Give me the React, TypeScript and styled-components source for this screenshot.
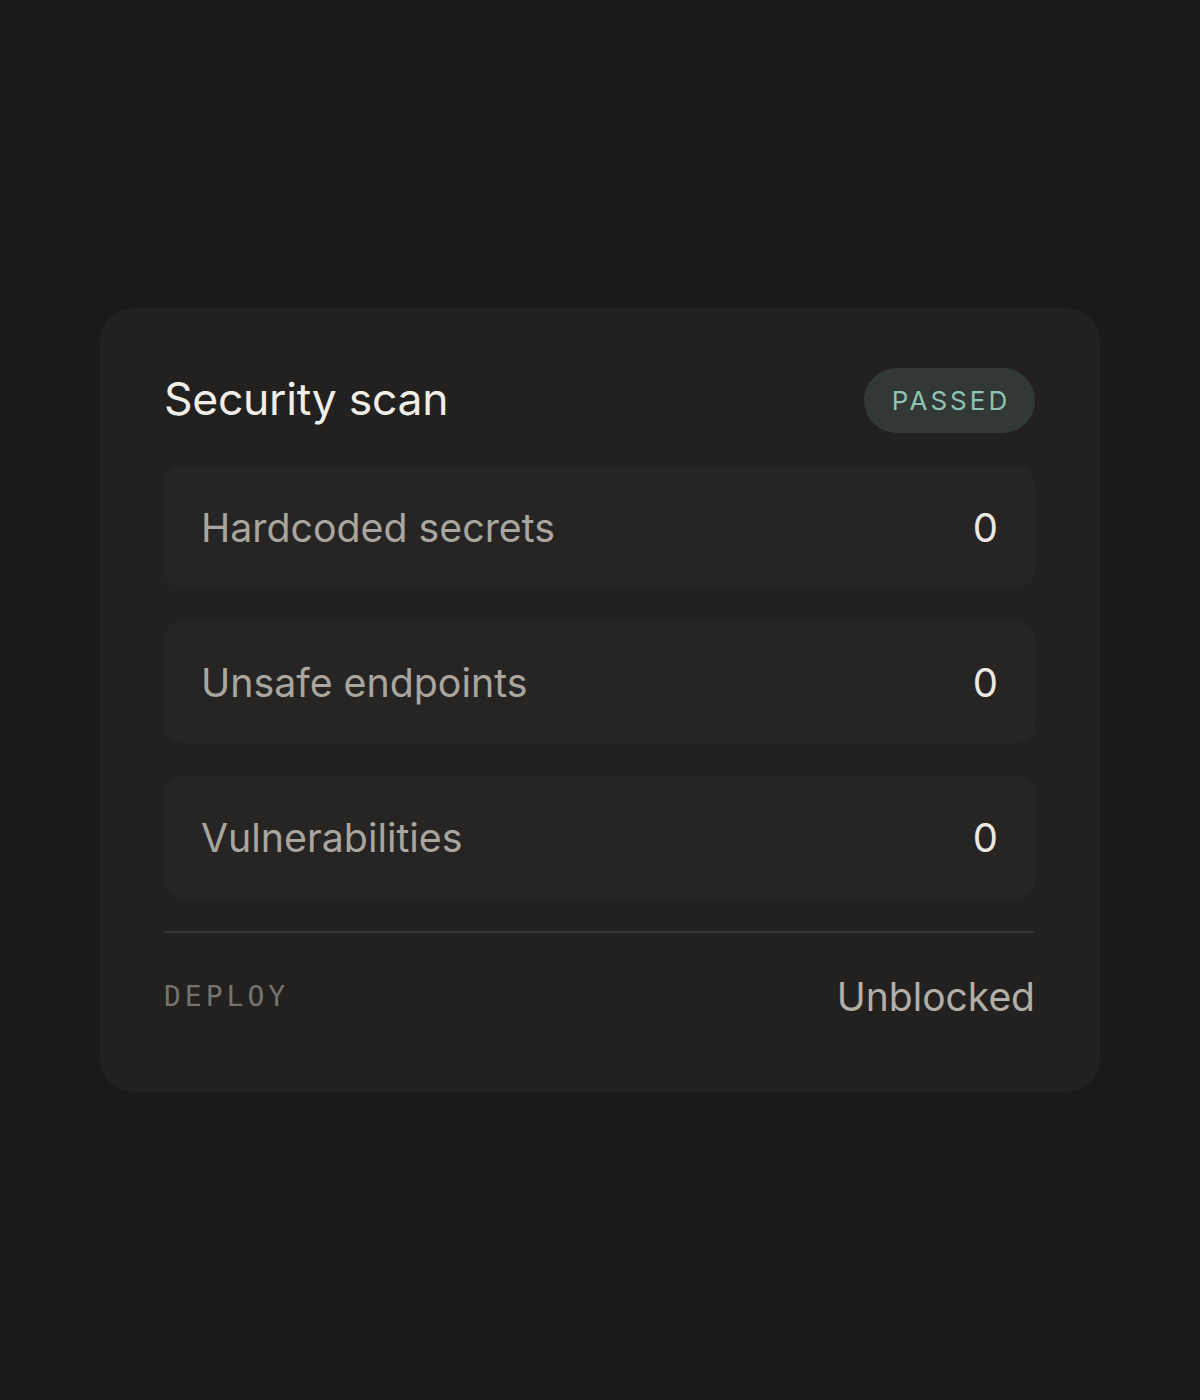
import React from "react";
import styled, { createGlobalStyle } from "styled-components";

const Global = createGlobalStyle`
  html, body { margin: 0; padding: 0; background: #1b1a19; }
  body { font-family: Inter, "Noto Sans", sans-serif; }
`;

const Page = styled.div`
  width: 1200px;
  height: 1400px;
  display: flex;
  align-items: flex-start;
  justify-content: center;
  padding-top: 308px;
  box-sizing: border-box;
`;

const Card = styled.section`
  width: 1000px;
  box-sizing: border-box;
  background: #222120;
  border-radius: 34px;
  padding: 60px 65px 65px 64px;
  display: flex;
  flex-direction: column;
  gap: 33px;
`;

const Header = styled.div`
  display: flex;
  align-items: center;
  justify-content: space-between;
  height: 65px;
`;

const Title = styled.h1`
  margin: 0;
  font-size: 44.5px;
  font-weight: 400;
  color: #f1eee8;
  letter-spacing: -0.3px;
  transform: translateY(-2px);
`;

const Badge = styled.span`
  display: inline-flex;
  align-items: center;
  justify-content: center;
  height: 65px;
  width: 171px;
  border-radius: 33px;
  background: #323836;
  color: #8fc4b4;
  font-size: 26px;
  letter-spacing: 3px;
  padding-left: 3px;
  box-sizing: border-box;
`;

const Row = styled.div`
  height: 122px;
  border-radius: 18px;
  background: #262524;
  display: flex;
  align-items: center;
  justify-content: space-between;
  padding: 0 37px 0 37px;
`;

const Label = styled.span`
  font-size: 39.3px;
  color: #a9a6a0;
`;

const Value = styled.span`
  font-size: 40px;
  color: #ece9e3;
`;

const Divider = styled.hr`
  margin: 0;
  border: none;
  height: 2px;
  background: #353432;
`;

const Footer = styled.div`
  display: flex;
  align-items: center;
  justify-content: space-between;
  height: 61px;
`;

const FooterLabel = styled.span`
  font-family: "DejaVu Sans Mono", monospace;
  font-size: 28px;
  letter-spacing: 4px;
  color: #75736e;
`;

const FooterValue = styled.span`
  font-size: 39px;
  color: #b2afa8;
`;

const rows = [
  { label: "Hardcoded secrets", value: 0 },
  { label: "Unsafe endpoints", value: 0 },
  { label: "Vulnerabilities", value: 0 },
];

export default function App() {
  return (
    <>
      <Global />
      <Page>
        <Card>
          <Header>
            <Title>Security scan</Title>
            <Badge>PASSED</Badge>
          </Header>
          {rows.map((r) => (
            <Row key={r.label}>
              <Label>{r.label}</Label>
              <Value>{r.value}</Value>
            </Row>
          ))}
          <Divider />
          <Footer>
            <FooterLabel>DEPLOY</FooterLabel>
            <FooterValue>Unblocked</FooterValue>
          </Footer>
        </Card>
      </Page>
    </>
  );
}
